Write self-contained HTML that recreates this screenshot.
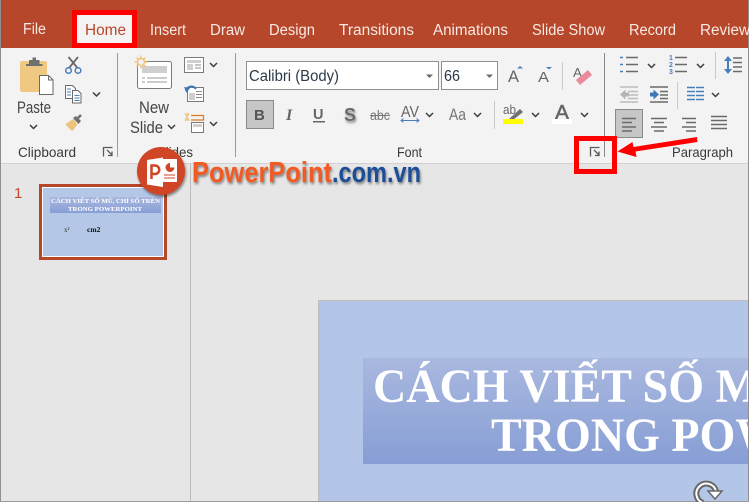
<!DOCTYPE html>
<html><head><meta charset="utf-8">
<style>
html,body{margin:0;padding:0;background:#e6e6e6;width:749px;height:502px;overflow:hidden}
svg{display:block;position:absolute;left:0;top:0}
text{font-family:"Liberation Sans",sans-serif}
.t{fill:#f7e9e4;font-size:15.5px}
.l{fill:#3a3a3a;font-size:14px}
.k{fill:#444;font-size:16.5px}
.g{fill:none;stroke:#5a5a5a;stroke-width:1.3}
.ch{fill:none;stroke:#3c3c3c;stroke-width:1.5}
.ln{stroke:#6a6a6a;stroke-width:1.5}
.bl{stroke:#4a7ebb;stroke-width:1.5}
.s{font-family:"Liberation Serif",serif;font-weight:bold}
</style></head><body>
<svg width="749" height="502" viewBox="0 0 749 502" xmlns="http://www.w3.org/2000/svg">
<defs>
<linearGradient id="tg" x1="0" y1="0" x2="0" y2="1"><stop offset="0" stop-color="#a9b8df"/><stop offset="1" stop-color="#879ed5"/></linearGradient>
<filter id="sh" x="-10%" y="-20%" width="120%" height="160%"><feDropShadow dx="1" dy="2" stdDeviation="1.4" flood-color="#000" flood-opacity=".45"/></filter>
</defs>

<rect width="749" height="502" fill="#e6e6e6"/>
<rect width="749" height="48" fill="#b7472a"/>
<rect y="48" width="749" height="115" fill="#f3f3f3"/>
<rect y="163" width="749" height="1" fill="#d2d2d2"/>
<rect x="0" y="0" width="1" height="502" fill="#8f8f8f"/>
<rect x="748" y="0" width="1" height="502" fill="#8f8f8f"/>

<!-- tabs -->
<rect x="74" y="12" width="61" height="36" fill="#f3f3f3"/>
<text class="t" x="23" y="34" textLength="23" lengthAdjust="spacingAndGlyphs">File</text>
<text x="85" y="35" font-size="15.5" fill="#b7472a" textLength="41" lengthAdjust="spacingAndGlyphs">Home</text>
<text class="t" x="150" y="35" textLength="36" lengthAdjust="spacingAndGlyphs">Insert</text>
<text class="t" x="210" y="35" textLength="35" lengthAdjust="spacingAndGlyphs">Draw</text>
<text class="t" x="269" y="35" textLength="46" lengthAdjust="spacingAndGlyphs">Design</text>
<text class="t" x="339" y="35" textLength="75" lengthAdjust="spacingAndGlyphs">Transitions</text>
<text class="t" x="433" y="35" textLength="75" lengthAdjust="spacingAndGlyphs">Animations</text>
<text class="t" x="532" y="35" textLength="73" lengthAdjust="spacingAndGlyphs">Slide Show</text>
<text class="t" x="629" y="35" textLength="47" lengthAdjust="spacingAndGlyphs">Record</text>
<text class="t" x="700" y="35" textLength="50" lengthAdjust="spacingAndGlyphs">Review</text>
<rect x="74.5" y="12.5" width="60" height="33" fill="none" stroke="#fe0000" stroke-width="5"/>

<!-- separators -->
<rect x="117" y="53" width="1" height="104" fill="#9a9a9a"/>
<rect x="235" y="53" width="1" height="104" fill="#9a9a9a"/>
<rect x="604" y="53" width="1" height="104" fill="#8a8a8a"/>

<!-- clipboard -->
<rect x="20" y="61" width="27" height="31" rx="2" fill="#efc981"/>
<path d="M26 64h3v-4h3.500v-2.500h3.500v2.500h3.500v4h3v2h-16.500z" fill="#6f6f6f"/>
<path d="M39.500 75.500h9l4.500 4.500v14.500h-13.500z" fill="#fff" stroke="#6a6a6a"/>
<path d="M48.500 75.500v4.500h4.500" fill="none" stroke="#6a6a6a"/>
<text class="k" x="17" y="113" textLength="34" lengthAdjust="spacingAndGlyphs">Paste</text>
<path class="ch" d="M30 125l3.500 3.500 3.500-3.500"/>
<text class="l" x="18" y="157" textLength="58" lengthAdjust="spacingAndGlyphs">Clipboard</text>
<path d="M103.500 156.500v-9h9M107 150l5 5m0-3.500v4h-4" class="g"/>
<!-- scissors -->
<path d="M68.500 57l9 11M78 57l-9 11" stroke="#6a6a6a" stroke-width="1.800" fill="none"/>
<circle cx="68.500" cy="70.500" r="2.800" fill="none" stroke="#4a7ebb" stroke-width="1.500"/>
<circle cx="78" cy="70.500" r="2.800" fill="none" stroke="#4a7ebb" stroke-width="1.500"/>
<!-- copy -->
<path d="M65.500 85.500h7l3 3v10h-10z" fill="#fff" stroke="#6a6a6a"/>
<path d="M72.500 90.500h5.500l3 3v9.500h-8.500z" fill="#fff" stroke="#6a6a6a"/>
<path d="M67 89h4M67 92h4M67 95h4M74.500 95.500h5M74.500 98h5M74.500 100.500h5" stroke="#4a7ebb"/>
<path class="ch" d="M93 92.500l3.500 3.500 3.500-3.500"/>
<!-- brush -->
<path d="M65.500 124l8-5 4 5.500-5 6.500c-3-2-5-4-7-7z" fill="#efc37b"/>
<path d="M73 118l3-2 5 5-2.500 3z" fill="#6f6f6f"/>
<path d="M78 118l3-3" stroke="#6f6f6f" stroke-width="2.500"/>

<!-- new slide -->
<rect x="137.500" y="61.500" width="34" height="27" rx="2" fill="#fff" stroke="#7a7a7a"/>
<rect x="142" y="66" width="25" height="7" fill="#cfcfcf"/>
<path d="M142 78h3M147 78h20M142 82h3M147 82h20" stroke="#9a9a9a"/>
<circle cx="141" cy="62" r="3.500" fill="#f3f3f3" stroke="#efc37b" stroke-width="1.500"/>
<path d="M141 55.500v3M141 65.500v3M134.500 62h3M144.500 62h3M136.500 57.500l2 2M143.500 64.500l2 2M145.500 57.500l-2 2M138.500 64.500l-2 2" stroke="#efc37b" stroke-width="1.500"/>
<text class="k" x="139" y="113" textLength="30" lengthAdjust="spacingAndGlyphs">New</text>
<text class="k" x="130" y="133" textLength="33" lengthAdjust="spacingAndGlyphs">Slide</text>
<path class="ch" d="M168 125l3.500 3.500 3.500-3.500"/>
<text class="l" x="157" y="157" textLength="36" lengthAdjust="spacingAndGlyphs">Slides</text>
<!-- layout -->
<rect x="184.500" y="57.500" width="19" height="15" fill="#fff" stroke="#7a7a7a"/>
<rect x="187" y="60" width="14" height="3" fill="#cfcfcf"/><rect x="187" y="64" width="6" height="6" fill="#cfcfcf"/>
<path d="M195 65h6M195 68h6" stroke="#8a8a8a"/>
<path class="ch" d="M210 63l3.500 3.500 3.500-3.500"/>
<!-- reset -->
<rect x="187.500" y="87.500" width="16" height="14" fill="#fff" stroke="#7a7a7a"/>
<rect x="189" y="93" width="6" height="7" fill="#cfcfcf"/>
<path d="M196 91.500h6M196 94.500h6M196 97.500h6" stroke="#8a8a8a"/>
<path d="M186 91c1-5 7-6 10-2" fill="none" stroke="#3f78b5" stroke-width="2"/><path d="M184 87l2.500 6 3.500-5z" fill="#3f78b5"/>
<!-- section -->
<path d="M185 115h4M185 119h4M187 113v8M185 113l4 8M189 113l-4 8" stroke="#efc37b"/>
<path d="M191 115.500h12.500v4.500h-12.500" fill="none" stroke="#e07a1f" stroke-width="1.200"/>
<rect x="191.500" y="122.500" width="12" height="10" fill="#fff" stroke="#7a7a7a"/><rect x="193" y="124" width="9" height="3" fill="#cfcfcf"/>
<path class="ch" d="M210 122l3.500 3.500 3.500-3.500"/>

<!-- font boxes -->
<rect x="246.500" y="61.500" width="192" height="28" fill="#fff" stroke="#8f8f8f"/>
<rect x="441.500" y="61.500" width="56" height="28" fill="#fff" stroke="#8f8f8f"/>
<text x="249" y="81" font-size="15.500" fill="#2c3a48" textLength="90" lengthAdjust="spacingAndGlyphs">Calibri (Body)</text>
<text x="444" y="81" font-size="15.500" fill="#2c3a48" textLength="16" lengthAdjust="spacingAndGlyphs">66</text>
<path d="M426 74.500h7l-3.500 3.500z" fill="#6a6a6a"/><path d="M486 74.500h7l-3.500 3.500z" fill="#6a6a6a"/>
<text x="508" y="82" font-size="17" fill="#666" textLength="11" lengthAdjust="spacingAndGlyphs">A</text>
<path d="M517 68.500l3-2.500 3 2.500z" fill="#4a7ebb"/>
<text x="538" y="82" font-size="15" fill="#666" textLength="11" lengthAdjust="spacingAndGlyphs">A</text>
<path d="M546 67h6l-3 2.500z" fill="#4a7ebb"/>
<rect x="562" y="62" width="1" height="28" fill="#c9c9c9"/>
<text x="573" y="77" font-size="13" fill="#666" textLength="9" lengthAdjust="spacingAndGlyphs">A</text>
<path d="M576 80l12-10 4 5-12 10z" fill="#ea8a9a"/>

<!-- font row 2 -->
<rect x="246.500" y="100.500" width="27" height="28" fill="#c6c6c6" stroke="#8a8a8a"/>
<text x="254" y="120" font-size="15" font-weight="bold" fill="#555">B</text>
<text x="286" y="120" font-size="16" font-weight="bold" font-style="italic" style="font-family:'Liberation Serif',serif" fill="#666">I</text>
<text x="313" y="119" font-size="14.500" font-weight="bold" fill="#666">U</text>
<rect x="313" y="121" width="12" height="1.500" fill="#666"/>
<text x="344" y="121" font-size="18" font-weight="bold" fill="#6a6a6a" filter="url(#sh)">S</text>
<text x="370" y="120" font-size="13.500" fill="#777" textLength="20" lengthAdjust="spacingAndGlyphs">abc</text>
<rect x="370" y="115" width="20" height="1" fill="#777"/>
<text x="401" y="117" font-size="16" fill="#666" textLength="18" lengthAdjust="spacingAndGlyphs">AV</text>
<path d="M401 120.500h18M403.500 118.500l-2.500 2 2.500 2M416.500 118.500l2.500 2-2.500 2" fill="none" stroke="#4a7ebb"/>
<path class="ch" d="M426 113l3.500 3.500 3.500-3.500"/>
<text x="449" y="120" font-size="17" fill="#777" textLength="17" lengthAdjust="spacingAndGlyphs">Aa</text>
<path class="ch" d="M474 113l3.500 3.500 3.500-3.500"/>
<rect x="494" y="101" width="1" height="28" fill="#c9c9c9"/>
<text x="503" y="114" font-size="13" fill="#666" textLength="13" lengthAdjust="spacingAndGlyphs">ab</text>
<path d="M509 119l11-10 3 3-10 8z" fill="#707070"/>
<rect x="503" y="119" width="20" height="5" fill="#ffff00"/>
<path class="ch" d="M532 113l3.500 3.500 3.500-3.500"/>
<text x="555" y="119" font-size="20" fill="#666" stroke="#666" stroke-width=".5" textLength="14" lengthAdjust="spacingAndGlyphs">A</text>
<rect x="552" y="119" width="20" height="5" fill="#fff"/>
<path class="ch" d="M581 113l3.500 3.500 3.500-3.500"/>
<text class="l" x="397" y="157" textLength="25" lengthAdjust="spacingAndGlyphs">Font</text>

<!-- paragraph row 1 -->
<path class="bl" d="M620 57.500h3M620 64.500h3M620 71.500h3" stroke-width="2.500"/>
<path class="ln" d="M626 57.500h12M626 64.500h12M626 71.500h12"/>
<path class="ch" d="M648 64l3.500 3.500 3.500-3.500"/>
<text x="669" y="60" font-size="7" font-weight="bold" fill="#4a7ebb">1</text>
<text x="669" y="67" font-size="7" font-weight="bold" fill="#4a7ebb">2</text>
<text x="669" y="74" font-size="7" font-weight="bold" fill="#4a7ebb">3</text>
<path class="ln" d="M675 57.500h12M675 64.500h12M675 71.500h12"/>
<path class="ch" d="M697 64l3.500 3.500 3.500-3.500"/>
<rect x="715" y="52" width="1" height="27" fill="#c9c9c9"/>
<path d="M728 58v14" stroke="#4a7ebb" stroke-width="2"/><path d="M724 61l4-5 4 5zM724 69l4 5 4-5z" fill="#4a7ebb"/>
<path class="ln" d="M733 58h9M733 62.500h9M733 67h9M733 71.500h9"/>

<!-- paragraph row 2 -->
<path d="M620 87h18M628 91.500h10M628 95h10M628 98.500h10M620 102h18" stroke="#bcbcbc" stroke-width="1.500"/>
<path d="M620 94.500l5.500-5v3h3.500v4h-3.500v3z" fill="#b4b4b4"/>
<path class="ln" d="M650 87h18M660 91.500h8M660 95h8M660 98.500h8M650 102h18"/>
<path d="M659 94.500l-5.500-5v3h-3.500v4h3.500v3z" fill="#3f78b5"/>
<rect x="677" y="82" width="1" height="27" fill="#c9c9c9"/>
<path class="bl" d="M687 87.500h8M696 87.500h8M687 91.500h8M696 91.500h8M687 95.500h8M696 95.500h8M687 99.500h8M696 99.500h8"/>
<path class="ch" d="M712 93l3.500 3.500 3.500-3.500"/>

<!-- paragraph row 3 -->
<rect x="615.500" y="109.500" width="27" height="28" fill="#c6c6c6" stroke="#8a8a8a"/>
<path class="ln" d="M622 118.500h14M622 122.500h10M622 127h14M622 131h10"/>
<path class="ln" d="M651 118.500h16M654 122.500h10M651 127h16M654 131h10"/>
<path class="ln" d="M682 118.500h14M686 122.500h10M682 127h14M686 131h10"/>
<path class="ln" d="M711 116.500h16M711 120.500h16M711 124.500h16M711 128.500h16"/>
<text class="l" x="672" y="157" textLength="61" lengthAdjust="spacingAndGlyphs">Paragraph</text>

<!-- launcher + callouts -->
<path d="M590.500 156.500v-9h9M594 150l5 5m0-3.500v4h-4" class="g"/>
<rect x="576.500" y="138.500" width="38" height="33" fill="none" stroke="#fe0000" stroke-width="5"/>
<path d="M697 137l.5 5-62 9.500 1 5.500-19-5.500 15-9.500 1 5z" fill="#fe0000"/>

<!-- panes -->
<rect x="190" y="164" width="1" height="338" fill="#bdbdbd"/>
<text x="14" y="198" font-size="15" fill="#c5492a">1</text>
<rect x="40.500" y="185.500" width="125" height="73" fill="#b4c7e7" stroke="#b7472a" stroke-width="3"/>
<rect x="42.500" y="187.500" width="121" height="69" fill="none" stroke="#fff"/>
<rect x="50" y="197" width="111" height="16" fill="url(#tg)"/>
<text class="s" x="51" y="203" font-size="6.500" fill="#fff" textLength="109" lengthAdjust="spacingAndGlyphs">CÁCH VIẾT SỐ MŨ, CHỈ SỐ TRÊN</text>
<text class="s" x="68" y="211" font-size="6.500" fill="#fff" textLength="74" lengthAdjust="spacingAndGlyphs">TRONG POWERPOINT</text>
<text class="s" x="64" y="232" font-size="7" fill="#333" style="font-weight:normal">x²</text>
<text class="s" x="87" y="232" font-size="7.500" fill="#111">cm2</text>

<!-- slide -->
<rect x="318" y="300" width="431" height="202" fill="#b4c6e7"/>
<rect x="318" y="300" width="431" height="1" fill="#bdbdbd"/>
<rect x="318" y="300" width="1" height="202" fill="#bdbdbd"/>
<rect x="363" y="358" width="386" height="106" fill="url(#tg)"/>
<text class="s" transform="translate(373,402) scale(.96,1)" font-size="48" fill="#fff">CÁCH VIẾT SỐ MŨ, CHỈ SỐ TRÊN</text>
<text class="s" transform="translate(491,451) scale(.96,1)" font-size="48" fill="#fff">TRONG POWERPOINT</text>
<rect x="748" y="300" width="1" height="202" fill="#8f8f8f"/>
<rect x="0" y="501" width="749" height="1" fill="#9a9a9a"/>
<!-- rotate handle -->
<path d="M716 491a10 10 0 1 0-13 12" fill="none" stroke="#666" stroke-width="6"/>
<path d="M716 491a10 10 0 1 0-13 12" fill="none" stroke="#fff" stroke-width="2"/>
<path d="M708 491h14l-7 8z" fill="#fff" stroke="#666" stroke-width="1.500"/>

<!-- logo -->
<g filter="url(#sh)">
<circle cx="161" cy="171" r="24" fill="#cf4526"/>
<path d="M162 159h15v23h-15z" fill="#fff"/>
<path d="M170 163a4.500 4.500 0 1 0 4.500 4.500h-4.500z" fill="#cf4526"/>
<path d="M164 175h11M164 178h11" stroke="#cf4526"/>
<path d="M147 160l16-2.500v29.500l-16-2.500z" fill="#fff"/>
<path d="M151.500 179v-13.500h3.500a4 4 0 0 1 0 8.500h-2.500" fill="none" stroke="#cf4526" stroke-width="2.500"/>
<text x="192" y="182" font-size="29" font-weight="bold" fill="#f15a22" textLength="140" lengthAdjust="spacingAndGlyphs">PowerPoint</text>
<text x="332" y="182" font-size="29" font-weight="bold" fill="#1f4e96" textLength="89" lengthAdjust="spacingAndGlyphs">.com.vn</text>
</g>
</svg>
</body></html>
